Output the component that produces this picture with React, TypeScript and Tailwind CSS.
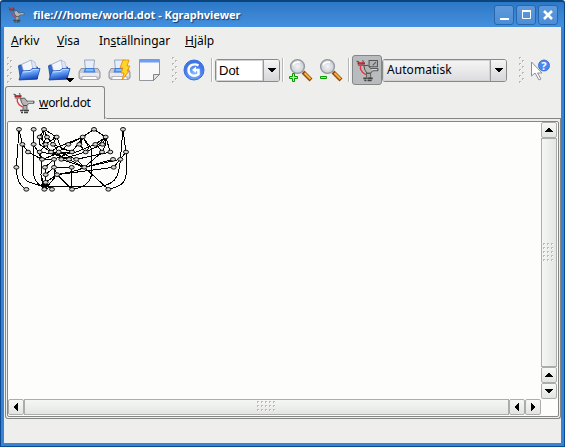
import React from 'react';

const nodes: [number, number][] = [
  [57, 43], [101, 43], [132, 43], [282, 43], [369, 43],
  [119, 66], [141, 66], [170, 66], [248, 66], [317, 66],
  [67, 88], [101, 88], [137, 88], [159, 88], [205, 88], [238, 88], [286, 88], [307, 88],
  [84, 111], [119, 111], [153, 111], [176, 111], [216, 111], [257, 111], [306, 111], [331, 111], [378, 111],
  [126, 133], [162, 133], [184, 133], [207, 133], [229, 133], [339, 133], [361, 133],
  [49, 157], [135, 157], [162, 157], [215, 157], [253, 157], [341, 157],
  [137, 179], [171, 179], [137, 202],
  [79, 223], [133, 223], [156, 223], [216, 223], [325, 223],
];

const edges = [
  'M57 43L49 157C50 190 60 215 79 223', 'M57 43L67 88V175C70 205 105 205 133 216',
  'M57 43L67 88L84 111L126 133', 'M101 43V180C105 205 122 210 133 223',
  'M132 43L119 66L137 88L153 111', 'M132 43L141 66L159 88', 'M132 43L170 66L184 100L216 111',
  'M132 43L126 75', 'M101 88L126 133', 'M119 66V88L153 111', 'M141 66L126 88',
  'M170 66L159 88L176 111', 'M170 66L137 88L119 111L126 133', 'M159 66H170',
  'M248 66L205 88L176 111', 'M248 66L170 98L153 111',
  'M248 66L238 88L257 111', 'M248 66L267 98L257 111', 'M248 66L216 111',
  'M248 66L274 100V180C272 205 245 219 216 223', 'M248 66L242 95L257 111',
  'M282 43L248 66', 'M282 43L317 66L307 88L257 111',
  'M317 66L286 88L229 111H153', 'M317 66L331 111', 'M317 66V90L306 111', 'M317 66L292 92L306 111',
  'M369 43L361 133L341 157L171 179', 'M369 43L378 111V180C377 206 350 218 325 223',
  'M361 133C358 190 342 212 290 215L156 214L133 223', 'M378 111L361 133',
  'M361 133L253 157', 'M339 133L253 157', 'M306 111L253 157', 'M331 111L229 133',
  'M257 111L184 133', 'M216 111L162 133V157', 'M184 133L253 157', 'M229 133L253 157',
  'M207 133L253 157', 'M159 88L216 111', 'M126 133L162 120L216 111', 'M126 133H162', 'M119 111L162 118L207 133',
  'M153 111L207 133', 'M176 111L229 133L253 157', 'M162 133L135 157V223',
  'M126 133L123 179L130 205L156 223', 'M162 157L215 157V223', 'M162 133V157L137 179V202',
  'M162 157L171 179L216 223', 'M171 179L137 202L156 223', 'M162 157V190L150 205L133 223',
  'M253 157L325 223', 'M253 157C230 170 200 172 171 179', 'M123 188L133 223',
];

function Graph() {
  return (
    <svg className="mt-[3px] ml-1" width="122" height="74" viewBox="36 30 366 222" fill="none" stroke="#000" strokeWidth="3" shapeRendering="crispEdges">
      {edges.map((d, i) => <path key={i} d={d} />)}
      <path d="M124 206h18v11h-18z" fill="#000" stroke="none" />
      {nodes.map(([x, y], i) => (
        <ellipse key={i} cx={x} cy={y} rx="7.5" ry="5.5" fill="#d4d4d4" shapeRendering="auto" strokeWidth="2.8" />
      ))}
    </svg>
  );
}

function Robot({ screen = false, className = '' }: { screen?: boolean; className?: string }) {
  return (
    <svg className={className} viewBox="0 0 22 22" fill="none">
      {screen && <path d="M12.5 1.5h8v6h-8zM16 6l3-3" fill="#b4b4b4" stroke="#555" />}
      <path d="M10 13.500h4v5h-4z" stroke="#666" fill="#aaa" />
      <path d="M7 18.500h3M11 18.500h5M8 20.500h2M11 20.500h4" stroke="#444" strokeWidth="1.5" />
      <path d="M7.500 6.500l4-.5 2.500 3.200h7v2h-5l-2 2.300h-3.500l-2-3z" fill="#b5b5b5" stroke="#484848" strokeWidth=".9" />
      <path d="M15 10.200h5" stroke="#eee" strokeWidth=".8" />
      <path d="M.5 2L3 3M6 1.500l1.500 1M2 6h6" stroke="#555" strokeWidth="1.1" />
      <path d="M1.500 4.200h7" stroke="#a3242b" strokeWidth="2.200" />
      <path d="M3 3.800h3" stroke="#ee3d46" />
      <path d="M4.300 6.500v3l1.700 3 3.500 2.500" stroke="#ee2f38" strokeWidth="1.300" />
    </svg>
  );
}

function Folder({ className = '' }: { className?: string }) {
  return (
    <svg className={className} width="24" height="22" viewBox="0 0 24 22">
      <path d="M1.5 7l1-1h4l2 2h12v12l-17 .5z" fill="#316bd6" stroke="#1746a0" strokeWidth=".8" />
      <path d="M4.5 5.5L14 1l5 9-12 4z" fill="#f3f5fd" stroke="#8a97b8" strokeWidth=".7" />
      <path d="M14 1l4 2 2 8h-4z" fill="#dce4f7" stroke="#93a0c2" strokeWidth=".5" />
      <path d="M5 12l8-.5 2-2h8L20 20 2 21z" fill="url(#folderBlue)" stroke="#1746ae" strokeWidth=".8" />
      <path d="M6 13l8-.6 2-2h5.5" fill="none" stroke="#c9e2ff" />
    </svg>
  );
}

function Printer({ bolt = false, className = '' }: { bolt?: boolean; className?: string }) {
  return (
    <svg className={className} width="23" height="23" viewBox="0 0 23 23">
      <path d="M3 9.500h17l2 3.500v6l-2 1.500H3L1 19v-6z" fill="#c9c9d1" stroke="#83838f" strokeWidth=".8" />
      <path d="M6.5 1h10l-1 10h-8z" fill="#e6eefb" stroke="#8793ac" strokeWidth=".8" />
      <path d="M7 9h9l1.5 4.500h-12z" fill="#3c80e6" />
      <path d="M8 10h7l.7 2.2H7.4z" fill="#83bdff" />
      <path d="M2 14h19v3.5H2z" fill="#e9e9ed" /><path d="M4.5 17.5h14l1 3H3.500z" fill="#fff" stroke="#9c9ca6" strokeWidth=".7" />
      {bolt && <path d="M15 1h6l-2 6h3l-3 5h2l-7 9 2-7h-3l2-5h-3z" fill="#ffd52a" stroke="#ee8c00" strokeWidth=".9" />}
    </svg>
  );
}

function Lens({ plus = false, className = '' }: { plus?: boolean; className?: string }) {
  return (
    <svg className={className} width="24" height="24" viewBox="0 0 24 24">
      <path d="M14 14l8 8" stroke="#8f4b10" strokeWidth="4" /><path d="M15.5 15l6 6" stroke="#ffae35" strokeWidth="2" />
      <circle cx="8.5" cy="8.5" r="6.9" fill="url(#lensGlass)" stroke="#92969e" strokeWidth="1.4" />
      <path d="M4 7.5c1-3 4-4 7-3" fill="none" stroke="#fff" strokeWidth="1.5" />
      {plus ? <path d="M3.5 15.5h2v3h3v2h-3v3h-2v-3h-3v-2h3z" fill="#a9fb7c" stroke="#069900" />
        : <path d="M1.5 18.5h6v2h-6z" fill="#a9fb7c" stroke="#069900" />}
    </svg>
  );
}

function Handle({ className = '' }: { className?: string }) {
  return (
    <svg className={className} width="6" height="27" viewBox="0 0 6 27" shapeRendering="crispEdges">
      {[0, 1, 2, 3, 4, 5, 6, 7, 8].map((n) => (
        <g key={n}>
          <path d={`M${n % 2 ? 3 : 0} ${n * 3}h2v1h-1v1h-1z`} fill="#b8b8b6" />
          <path d={`M${n % 2 ? 4 : 1} ${n * 3 + 1}h1v1h-1z`} fill="#fff" />
        </g>
      ))}
    </svg>
  );
}

function Separator({ className = '' }: { className?: string }) {
  return <div className={`h-6 w-0.5 border-l border-[#b5b7b4] bg-white ${className}`} />;
}

const turns = { up: 'rotate-180', down: '', left: 'rotate-90', right: '-rotate-90' };

function Arrow({ dir = 'down' }: { dir?: keyof typeof turns }) {
  return (
    <svg className={turns[dir]} width="8" height="4" viewBox="0 0 8 4" shapeRendering="crispEdges">
      <path d="M0 0h8v1H7v1H6v1H5v1H3V3H2V2H1V1H0z" fill="#000" />
    </svg>
  );
}

function ScrollButton({ dir }: { dir: keyof typeof turns }) {
  return (
    <div className="flex size-4 shrink-0 items-center justify-center rounded-[2px] border border-[#acacac] bg-linear-to-b from-[#f7f8f7] to-[#e3e5e2]">
      <Arrow dir={dir} />
    </div>
  );
}

function Grip({ cols, rows }: { cols: number; rows: number }) {
  return (
    <svg width={cols * 4} height={rows * 4} shapeRendering="crispEdges">
      {Array.from({ length: cols * rows }, (_, i) => {
        const x = (i % cols) * 4;
        const y = Math.floor(i / cols) * 4;
        return <g key={i}><path d={`M${x} ${y}h2v1h-1v1h-1z`} fill="#bbb" /><path d={`M${x + 1} ${y + 1}h1v1h-1z`} fill="#fff" /></g>;
      })}
    </svg>
  );
}

function Combo({ text, className, tone }: { text: string; className: string; tone: string }) {
  return (
    <div className={`flex h-[23px] overflow-hidden rounded-[3px] border border-[#888a88] ${className}`}>
      <div className={`flex flex-1 items-center leading-none shadow-[inset_0_0_0_1px_#d2d2d2] ${tone}`}>{text}</div>
      <div className="flex w-4 items-center justify-center border-l border-[#999] bg-linear-to-b from-[#f5f5f5] to-[#d6d6da]"><Arrow /></div>
    </div>
  );
}

function WindowButton({ children }: { children: React.ReactNode }) {
  return (
    <div className="size-5 rounded-[3px] border border-[#2967ad] bg-linear-to-b from-[#5f99da] to-[#4a8ed9]">
      <svg width="18" height="18" viewBox="0 0 18 18" fill="none" stroke="#fff" strokeWidth="2">{children}</svg>
    </div>
  );
}

export default function App() {
  return (
    <div className="flex h-[447px] w-[565px] flex-col overflow-hidden bg-[#eeefec] font-['Noto_Sans','Open_Sans',sans-serif] text-[12px] text-black">
      <header className="flex h-[27px] shrink-0 items-center rounded-t-[3px] border-x border-t-2 border-[#0d437b] bg-linear-to-b from-[#2a78c8] via-[#3a84d1] to-[#4290df] pl-[7px]">
        <Robot className="size-[17px]" />
        <h1 className="ml-2 text-[11px] leading-none font-bold tracking-[-0.04px] whitespace-nowrap text-white [text-shadow:1px_1px_1px_#103f76]">file:///home/world.dot - Kgraphviewer</h1>
        <div className="mr-1.5 ml-auto flex gap-0.5">
          <WindowButton><path d="M5 13h9" /></WindowButton>
          <WindowButton><path d="M5.5 5.5h8v7h-8z" strokeWidth="1" /><path d="M5 5h9" /></WindowButton>
          <WindowButton><path d="M5 5l8 8M13 5l-8 8" strokeWidth="2.5" /></WindowButton>
        </div>
      </header>

      <div className="flex min-h-0 flex-1 flex-col border-x border-b border-[#0d4a91]">
        <div className="flex min-h-0 flex-1 flex-col border-x-[3px] border-b-[3px] border-[#3584d8]">
          <nav className="flex h-[27px] shrink-0 items-center pl-[7px] whitespace-nowrap">
            <span className="w-[46px]"><u>A</u>rkiv</span>
            <span className="w-[42px]"><u>V</u>isa</span>
            <span className="w-[86px] tracking-[-0.03px]">In<u>s</u>tällningar</span>
            <span><u>H</u>jälp</span>
          </nav>

          <div className="flex h-8 shrink-0 items-center">
            <svg className="size-0">
              <defs>
                <linearGradient id="folderBlue" x2="0.3" y2="1"><stop stopColor="#b5d7ff" /><stop offset="0.45" stopColor="#6aa4f6" /><stop offset="1" stopColor="#1549bd" /></linearGradient>
                <radialGradient id="lensGlass"><stop stopColor="#f4f4f6" /><stop offset="1" stopColor="#c8ccd3" /></radialGradient>
                <radialGradient id="blueBall" cy="0.7"><stop stopColor="#8cbcff" /><stop offset="1" stopColor="#3d76e6" /></radialGradient>
              </defs>
            </svg>
            <Handle className="ml-[3px]" />
            <Folder className="ml-1" />
            <div className="relative ml-1.5">
              <Folder />
              <div className="absolute top-[19px] left-[19px]"><Arrow /></div>
            </div>
            <Printer className="ml-[7px]" />
            <Printer bolt className="ml-[7px]" />
            <svg className="ml-2" width="21" height="23" viewBox="0 0 21 23">
              <path d="M.5.5h20v15l-6 6H.5z" fill="#f8f8f9" stroke="#92979f" />
              <path d="M1 1h19v2.5H1z" fill="#6f9ff0" /><path d="M14.5 21.5v-6h6z" fill="#e2e2e2" stroke="#858585" />
            </svg>
            <Handle className="ml-3" />
            <svg className="ml-[5px]" width="22" height="22" viewBox="0 0 22 22">
              <circle cx="11" cy="11" r="10" fill="url(#blueBall)" stroke="#3a6fda" />
              <path d="M15.5 6.5C11.5 4 5.5 6 5.5 11s5.500 7.500 10 4.300V11H12" fill="none" stroke="#fff" strokeWidth="2.4" />
              <path d="M13 7.500v6.500L9 11z" fill="#fff" />
            </svg>
            <Separator className="ml-[6px]" />
            <Combo text="Dot" className="ml-0.5 w-[65px]" tone="bg-white pl-[3px] font-['Liberation_Sans',sans-serif] text-[13px]" />
            <Separator className="ml-0.5" />
            <Lens plus className="ml-[5px]" />
            <Lens className="ml-1.5" />
            <Separator className="ml-[5px]" />
            <div className="ml-0.5 flex size-[30px] items-center justify-center rounded-[3px] border border-[#858786] bg-[#b9bcbe]">
              <Robot screen className="size-[23px]" />
            </div>
            <Combo text="Automatisk" className="w-[125px]" tone="bg-linear-to-b from-[#f6f6f6] to-[#dcdcdf] pb-px pl-1 text-[12px] tracking-[0.05px]" />
            <Handle className="ml-3" />
            <svg className="ml-[5px]" width="21" height="22" viewBox="0 0 21 22">
              <path d="M1.500 3v14l3.500-3 4 7 2-1-3.500-6H12z" fill="#fff" stroke="#8b9097" />
              <circle cx="14" cy="6.5" r="5.5" fill="#4a87f0" stroke="#2e66cc" strokeWidth=".8" />
              <text x="11.2" y="10.5" fontSize="11" fontWeight="bold" fill="#fff">?</text>
            </svg>
          </div>

          <div className="flex h-[33px] shrink-0">
            <div className="ml-px flex w-[100px] items-center rounded-t-[3px] border border-b-0 border-[#858785] bg-[#eff0ee] pl-[7px]">
              <Robot className="size-[22px]" />
              <span className="ml-[4px] tracking-[-0.3px]"><u>w</u>orld.dot</span>
            </div>
            <div className="flex-1 rounded-bl-[3px] border-b border-[#858785]" />
          </div>

          <main className="ml-px flex h-[300px] shrink-0 flex-col rounded-b-[3px] border-x border-b border-[#858785] px-px pt-0.5 pb-px">
            <div className="flex flex-1 flex-col rounded-[2px] border border-[#858785] bg-[#fdfefb]">
              <div className="flex min-h-0 flex-1">
                <div className="flex-1"><Graph /></div>
                <div className="mr-px flex w-4 flex-col">
                  <ScrollButton dir="up" />
                  <div className="flex flex-1 items-center justify-center border border-[#acacac] bg-linear-to-r from-[#f6f7f5] to-[#e4e6e2]"><Grip cols={3} rows={5} /></div>
                  <ScrollButton dir="up" />
                  <ScrollButton dir="down" />
                </div>
              </div>
              <div className="mr-[17px] mb-px flex h-4">
                <ScrollButton dir="left" />
                <div className="flex flex-1 items-center justify-center border border-[#acacac] bg-linear-to-b from-[#f6f7f5] to-[#e4e6e2]"><Grip cols={5} rows={3} /></div>
                <ScrollButton dir="left" />
                <ScrollButton dir="right" />
              </div>
            </div>
          </main>
          <footer className="flex-1" />
        </div>
      </div>
    </div>
  );
}
